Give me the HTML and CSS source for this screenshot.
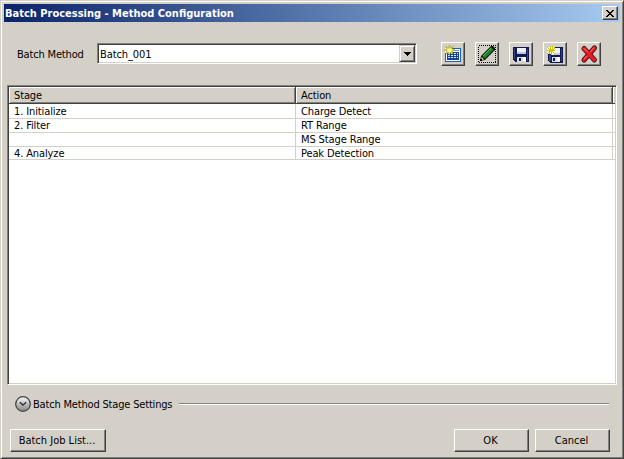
FILE: index.html
```html
<!DOCTYPE html>
<html lang="en">
<head>
<meta charset="utf-8">
<title>Batch Processing - Method Configuration</title>
<link rel="stylesheet" href="styles.css">
</head>
<body>
<main class="window">
  <header class="titlebar">
    <h1>Batch Processing - Method Configuration</h1>
    <button class="raised close" aria-label="Close"><svg width="8" height="7" viewBox="0 0 8 7"><path d="M0 0h2v1h1v1h2V1h1V0h2v1H7v1H6v1H5v1h1v1h1v1h1v1H6V6H5V5H3v1H2v1H0V6h1V5h1V4h1V3H2V2H1V1H0z"/></svg></button>
  </header>

  <section class="toolbar">
    <span class="label">Batch Method</span>
    <div class="combo">
      <span class="combo-text">Batch_001</span>
      <button class="raised drop" aria-label="Open list"><svg width="7" height="4" viewBox="0 0 7 4"><path d="M0 0h7v1H6v1H5v1H4v1H3V3H2V2H1V1H0z"/></svg></button>
    </div>
    <div class="tools">
      <button class="raised tool" aria-label="New"><svg width="20" height="20" viewBox="0 0 20 20">
        <path d="M2 4h16v14H2z" fill="#f8fbff"/>
        <path d="M8 4h10v1H8zM17 4h1v14h-1zM2 9h1v8H2zM2 17h16v1H2z" fill="#1c62b0"/>
        <path d="M9 6h7v1H9z" fill="#5c9be0"/>
        <path d="M4 8h12v8H4z" fill="#18408c"/>
        <path d="M5 9h2v1H5zM8 9h2v1H8zM11 9h2v1h-2zM14 9h1v1h-1zM5 11h2v1H5zM8 11h2v1H8zM11 11h2v1h-2zM14 11h1v1h-1zM5 13h2v1H5zM8 13h2v1H8zM11 13h2v1h-2zM14 13h1v1h-1z" fill="#dceaff"/>
        <path class="smooth" d="M6.500 1.300l1 2.800 2.600-1.600L9 5l2.800 1-2.800 1.200 1.200 2.700-2.700-1.300-1 2.900-1.100-2.900-2.600 1.300 1.200-2.700L1.300 6 4 5 2.800 2.500 5.400 4.100z" fill="#fff025" stroke="#89801c" stroke-width=".5"/>
        <path d="M5 5h3v3H5z" fill="#ffffa0"/></svg></button>
      <button class="raised tool" aria-label="Edit"><svg width="20" height="20" viewBox="0 0 20 20">
        <path d="M1.500 1.500h17v17h-17z" fill="none" stroke="#000" stroke-dasharray="1 1"/>
        <path class="smooth" d="M3 17l1-5L14 2h2l2 2v2L8 16z" fill="#111"/>
        <path class="smooth" d="M5.200 12.200L14 3.400l2.700 2.300L7.800 14.800z" fill="#168324"/>
        <path class="smooth" d="M6 12l8.200-8.200" stroke="#5ec568" fill="none"/>
        <path class="smooth" d="M4.500 13l2.600 2.400L4 16.500z" fill="#f0c08c"/>
        <path d="M3 15h2v2H3z"/></svg></button>
      <button class="raised tool" aria-label="Save"><svg width="20" height="20" viewBox="0 0 20 20">
        <path d="M2 3h16v15H4v-1H3v-1H2z" fill="#101a50"/>
        <path d="M3 4h1v11H3zM16 5h1v12h-1z" fill="#35457f"/>
        <path d="M6 4h9v6H6z" fill="#eef2fc"/><path d="M6 8h9v2H6z" fill="#b9c8e4"/>
        <path d="M6 13h9v5H6z" fill="#d8dce4"/><path d="M8 14h2v3H8z" fill="#101a50"/><path d="M12 13h3v4h-3z" fill="#fff"/></svg></button>
      <button class="raised tool" aria-label="Save as new"><svg width="20" height="20" viewBox="0 0 20 20">
        <path d="M3 3h15v16H5v-1H4v-1H3z" fill="#101a50"/>
        <path d="M4 11h2v6H4zM16 5h1v12h-1z" fill="#35457f"/>
        <path d="M6 4h9v7H6z" fill="#eef2fc"/><path d="M9 9h6v2H9z" fill="#b9c8e4"/>
        <path d="M7 13h8v5H7z" fill="#d8dce4"/><path d="M8 14h2v3H8z" fill="#101a50"/><path d="M12 13h3v4h-3z" fill="#fff"/>
        <path d="M2 3h8v7H2z" fill="#fffce0"/>
        <path d="M5 2h1v3h1V2h1v3h1V3h1v2H9v1h1v1H8v1h1v1h1v1H9V9H8V8H7v3H6V8H5v2H4V9H3v1H2V9h1V8h1V7H2V6h2V5H3V4H2V3h1v1h1v1h1z" fill="#d0c410"/></svg></button>
      <button class="raised tool" aria-label="Delete"><svg class="smooth" width="20" height="20" viewBox="0 0 20 20">
        <path d="M5 4.500L15.500 16M15.500 4L5 16" fill="none" stroke="#42100f" stroke-width="5" stroke-linecap="round"/>
        <path d="M5 4.500L15.500 16M15.500 4L5 16" fill="none" stroke="#e81c26" stroke-width="3.400" stroke-linecap="round"/>
        <path d="M4.500 4l4 4M15 3.500l-4 4.500M7.500 12L5 15" fill="none" stroke="#ff7474"/></svg></button>
    </div>
  </section>

  <section class="list">
    <div class="row head"><span>Stage</span><span>Action</span><i></i></div>
    <div class="row"><span>1. Initialize</span><span>Charge Detect</span></div>
    <div class="row"><span>2. Filter</span><span>RT Range</span></div>
    <div class="row"><span></span><span>MS Stage Range</span></div>
    <div class="row last"><span>4. Analyze</span><span>Peak Detection</span></div>
  </section>

  <section class="settings">
    <svg class="smooth" width="16" height="16" viewBox="0 0 16 16">
      <defs><linearGradient id="disc" x2="0" y2="1"><stop stop-color="#fafafa"/><stop offset=".45" stop-color="#c4c4c4"/><stop offset="1" stop-color="#858585"/></linearGradient></defs>
      <circle cx="8" cy="8" r="7.300" fill="url(#disc)" stroke="#444" stroke-width="1.300"/>
      <path d="M4.800 6.200L8 9l3.200-2.800" fill="none" stroke="#333" stroke-width="1.400"/></svg>
    <span>Batch Method Stage Settings</span>
    <hr>
  </section>

  <footer class="actions">
    <button class="raised jobs">Batch Job List...</button>
    <button class="raised ok">OK</button>
    <button class="raised">Cancel</button>
  </footer>
</main>
</body>
</html>
```
FILE: styles.css
```css
* { box-sizing: border-box; }
body { margin: 0; background: #d4d0c8; }
.window {
  width: 624px;
  height: 459px;
  padding: 3px;
  display: flex;
  flex-direction: column;
  background: #d4d0c8;
  border: 1px solid #d4d0c8;
  border-right-color: #404040;
  border-bottom-color: #404040;
  box-shadow: inset 1px 1px #fff, inset -1px -1px #808080;
  font: 11px/14px "DejaVu Sans Condensed", "DejaVu Sans", sans-serif;
  color: #000;
}
svg { display: block; shape-rendering: crispEdges; }
.smooth { shape-rendering: auto; }
.raised {
  margin: 0;
  padding: 0;
  display: flex;
  align-items: center;
  justify-content: center;
  flex: none;
  background: #d4d0c8;
  border: 1px solid #fff;
  border-right-color: #404040;
  border-bottom-color: #404040;
  box-shadow: inset -1px -1px #808080;
  font: inherit;
  color: inherit;
}
.titlebar {
  height: 18px;
  flex: none;
  padding: 0 2px 0 1px;
  display: flex;
  align-items: center;
  justify-content: space-between;
  background: linear-gradient(90deg, #0a246a, #a6caf0);
}
h1 { margin: 0; font-size: 11px; line-height: 18px; padding-top: 1px; color: #fff; white-space: nowrap; }
.close { width: 16px; height: 14px; padding-right: 1px; }
.toolbar { height: 63px; flex: none; display: flex; align-items: flex-start; padding: 20px 0 0 13px; }
.label { width: 80px; padding-top: 6px; white-space: nowrap; letter-spacing: -0.17px; }
.combo {
  width: 320px;
  height: 21px;
  margin-top: 1px;
  display: flex;
  justify-content: space-between;
  background: #fff;
  border: 1px solid #808080;
  border-right-color: #fff;
  border-bottom-color: #fff;
  box-shadow: inset 1px 1px #404040, inset -1px -1px #d4d0c8;
  padding: 1px;
}
.combo-text { padding: 3px 0 0 1px; letter-spacing: -0.1px; }
.drop { width: 16px; height: 17px; border-color: #d4d0c8 #404040 #404040 #d4d0c8; box-shadow: inset 1px 1px #fff, inset -1px -1px #808080; }
.tools { display: flex; gap: 10px; margin-left: 24px; }
.tool { width: 24px; height: 24px; }
.list {
  width: 610px;
  height: 300px;
  margin-left: 3px;
  flex: none;
  background: #fff;
  border: 1px solid #808080;
  border-right-color: #fff;
  border-bottom-color: #fff;
  box-shadow: inset 1px 1px #404040, inset -1px -1px #d4d0c8;
  padding: 1px;
  letter-spacing: -0.12px;
}
.row { display: grid; grid-template-columns: 287px 317px 2px; height: 14px; border-bottom: 1px solid #d4d0c8; line-height: 13px; white-space: nowrap; }
.row span { border-right: 1px solid #d4d0c8; padding-left: 5px; }
.head { height: 17px; border: 0; background: #d4d0c8; line-height: 14px; }
.head span { border-right-color: #404040; border-bottom: 1px solid #404040; box-shadow: inset 1px 1px #fff, inset -1px -1px #808080; padding-top: 2px; }
.head i { border-bottom: 1px solid #404040; box-shadow: inset 1px 1px #fff; }
.head + .row { height: 15px; line-height: 13px; }
.head + .row span { padding-top: 1px; }
.last { height: 13px; line-height: 13px; grid-template-rows: 12px; }
.settings { height: 16px; margin: 11px 11px 0; flex: none; display: flex; align-items: center; }
.settings span { width: 148px; padding: 1px 0 0 2px; white-space: nowrap; letter-spacing: -0.18px; }
hr { flex: 1; height: 2px; margin: 0; border: 0; background: linear-gradient(#808080 50%, #fff 50%); }
.actions { display: flex; gap: 6px; margin: 17px 10px 0 6px; height: 23px; }
.actions .raised { width: 75px; padding-right: 2px; }
.actions .jobs { width: 96px; }
.ok { margin-left: auto; }
```
